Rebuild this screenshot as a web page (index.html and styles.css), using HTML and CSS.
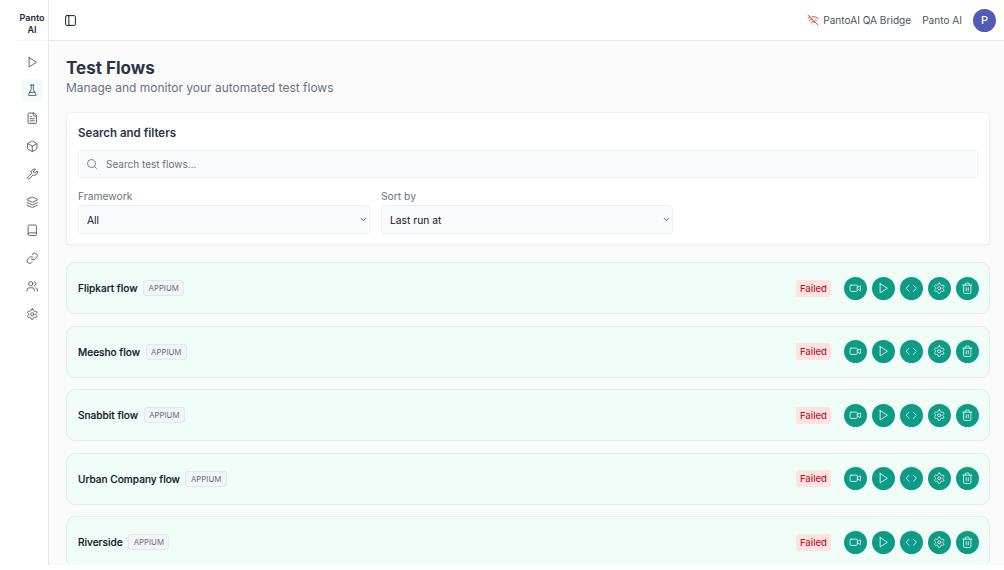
FILE: index.html
```html
<!DOCTYPE html>
<html lang="en">
<head>
<meta charset="utf-8">
<title>Test Flows</title>
<link rel="stylesheet" href="styles.css">
</head>
<body>
<svg class="sprite" aria-hidden="true">
  <symbol id="i-play" viewBox="0 0 24 24"><polygon points="6 3 20 12 6 21 6 3"/></symbol>
  <symbol id="i-flask" viewBox="0 0 24 24"><path d="M10 2v7.527a2 2 0 0 1-.211.896L4.72 20.55a1 1 0 0 0 .9 1.45h12.76a1 1 0 0 0 .9-1.45l-5.069-10.127A2 2 0 0 1 14 9.527V2"/><path d="M8.5 2h7"/><path d="M7 16h10"/></symbol>
  <symbol id="i-file" viewBox="0 0 24 24"><path d="M15 2H6a2 2 0 0 0-2 2v16a2 2 0 0 0 2 2h12a2 2 0 0 0 2-2V7Z"/><path d="M14 2v4a2 2 0 0 0 2 2h4"/><path d="M10 9H8"/><path d="M16 13H8"/><path d="M16 17H8"/></symbol>
  <symbol id="i-box" viewBox="0 0 24 24"><path d="M21 8a2 2 0 0 0-1-1.73l-7-4a2 2 0 0 0-2 0l-7 4A2 2 0 0 0 3 8v8a2 2 0 0 0 1 1.73l7 4a2 2 0 0 0 2 0l7-4A2 2 0 0 0 21 16Z"/><path d="m3.3 7 8.7 5 8.7-5"/><path d="M12 22V12"/></symbol>
  <symbol id="i-wrench" viewBox="0 0 24 24"><path d="M14.7 6.3a1 1 0 0 0 0 1.4l1.6 1.6a1 1 0 0 0 1.4 0l3.77-3.77a6 6 0 0 1-7.94 7.94l-6.91 6.91a2.12 2.12 0 0 1-3-3l6.91-6.91a6 6 0 0 1 7.94-7.94l-3.76 3.76z"/></symbol>
  <symbol id="i-layers" viewBox="0 0 24 24"><path d="M12.83 2.18a2 2 0 0 0-1.66 0L2.6 6.08a1 1 0 0 0 0 1.83l8.58 3.91a2 2 0 0 0 1.66 0l8.58-3.9a1 1 0 0 0 0-1.83Z"/><path d="m22 17.65-9.17 4.16a2 2 0 0 1-1.66 0L2 17.65"/><path d="m22 12.65-9.17 4.16a2 2 0 0 1-1.66 0L2 12.65"/></symbol>
  <symbol id="i-book" viewBox="0 0 24 24"><path d="M4 19.5v-15A2.5 2.5 0 0 1 6.5 2H18a2 2 0 0 1 2 2v16a2 2 0 0 1-2 2H6.5a2.5 2.5 0 0 1 0-5H20"/></symbol>
  <symbol id="i-link" viewBox="0 0 24 24"><path d="M10 13a5 5 0 0 0 7.54.54l3-3a5 5 0 0 0-7.07-7.07l-1.72 1.71"/><path d="M14 11a5 5 0 0 0-7.54-.54l-3 3a5 5 0 0 0 7.07 7.07l1.71-1.71"/></symbol>
  <symbol id="i-users" viewBox="0 0 24 24"><path d="M16 21v-2a4 4 0 0 0-4-4H6a4 4 0 0 0-4 4v2"/><circle cx="9" cy="7" r="4"/><path d="M22 21v-2a4 4 0 0 0-3-3.87"/><path d="M16 3.13a4 4 0 0 1 0 7.75"/></symbol>
  <symbol id="i-gear" viewBox="0 0 24 24"><path d="M12.22 2h-.44a2 2 0 0 0-2 2v.18a2 2 0 0 1-1 1.73l-.43.25a2 2 0 0 1-2 0l-.15-.08a2 2 0 0 0-2.73.73l-.22.38a2 2 0 0 0 .73 2.73l.15.1a2 2 0 0 1 1 1.72v.51a2 2 0 0 1-1 1.74l-.15.09a2 2 0 0 0-.73 2.73l.22.38a2 2 0 0 0 2.73.73l.15-.08a2 2 0 0 1 2 0l.43.25a2 2 0 0 1 1 1.73V20a2 2 0 0 0 2 2h.44a2 2 0 0 0 2-2v-.18a2 2 0 0 1 1-1.73l.43-.25a2 2 0 0 1 2 0l.15.08a2 2 0 0 0 2.73-.73l.22-.39a2 2 0 0 0-.73-2.73l-.15-.08a2 2 0 0 1-1-1.74v-.5a2 2 0 0 1 1-1.74l.15-.09a2 2 0 0 0 .73-2.73l-.22-.38a2 2 0 0 0-2.73-.73l-.15.08a2 2 0 0 1-2 0l-.43-.25a2 2 0 0 1-1-1.73V4a2 2 0 0 0-2-2z"/><circle cx="12" cy="12" r="3"/></symbol>
  <symbol id="i-video" viewBox="0 0 24 24"><path d="m16 13 5.223 3.482a.5.5 0 0 0 .777-.416V7.87a.5.5 0 0 0-.752-.432L16 10.5"/><rect x="2" y="6" width="14" height="12" rx="2"/></symbol>
  <symbol id="i-code" viewBox="0 0 24 24"><path d="m16 18 6-6-6-6"/><path d="m8 6-6 6 6 6"/></symbol>
  <symbol id="i-trash" viewBox="0 0 24 24"><path d="M3 6h18"/><path d="M19 6v14a2 2 0 0 1-2 2H7a2 2 0 0 1-2-2V6"/><path d="M8 6V4a2 2 0 0 1 2-2h4a2 2 0 0 1 2 2v2"/><path d="M10 11v6"/><path d="M14 11v6"/></symbol>
  <symbol id="i-wifi-off" viewBox="0 0 24 24"><path d="M12 20h.01"/><path d="M8.5 16.429a5 5 0 0 1 7 0"/><path d="M5 12.859a10 10 0 0 1 5.17-2.69"/><path d="M19 12.859a10 10 0 0 0-2.007-1.523"/><path d="M2 8.82a15 15 0 0 1 4.177-2.643"/><path d="M22 8.82a15 15 0 0 0-11.288-3.764"/><path d="m2 2 20 20"/></symbol>
  <symbol id="i-panel" viewBox="0 0 24 24"><rect x="3" y="3" width="18" height="18" rx="2"/><path d="M9 3v18"/></symbol>
  <symbol id="i-search" viewBox="0 0 24 24"><circle cx="11" cy="11" r="8"/><path d="m21 21-4.3-4.3"/></symbol>
  <symbol id="i-chevron" viewBox="0 0 24 24"><path d="m6 9 6 6 6-6"/></symbol>
</svg>

<div class="app">
  <aside class="sidebar">
    <div class="brand">Panto AI</div>
    <nav class="nav">
      <a class="nav-item"><svg class="icon"><use href="#i-play"/></svg></a>
      <a class="nav-item active"><svg class="icon"><use href="#i-flask"/></svg></a>
      <a class="nav-item"><svg class="icon"><use href="#i-file"/></svg></a>
      <a class="nav-item"><svg class="icon"><use href="#i-box"/></svg></a>
      <a class="nav-item"><svg class="icon"><use href="#i-wrench"/></svg></a>
      <a class="nav-item"><svg class="icon"><use href="#i-layers"/></svg></a>
      <a class="nav-item"><svg class="icon"><use href="#i-book"/></svg></a>
      <a class="nav-item"><svg class="icon"><use href="#i-link"/></svg></a>
      <a class="nav-item"><svg class="icon"><use href="#i-users"/></svg></a>
      <a class="nav-item"><svg class="icon"><use href="#i-gear"/></svg></a>
    </nav>
  </aside>

  <div class="body">
    <header class="topbar">
      <button class="panel-toggle"><svg class="icon dark"><use href="#i-panel"/></svg></button>
      <div class="top-right">
        <svg class="icon wifi"><use href="#i-wifi-off"/></svg>
        <span class="bridge">PantoAI QA Bridge</span>
        <span class="org">Panto AI</span>
        <span class="avatar">P</span>
      </div>
    </header>

    <main class="main">
      <h1 class="title">Test Flows</h1>
      <p class="subtitle">Manage and monitor your automated test flows</p>

      <section class="filters">
        <h2 class="filters-title">Search and filters</h2>
        <label class="search">
          <svg class="icon search-icon"><use href="#i-search"/></svg>
          <input class="search-input" type="text" placeholder="Search test flows...">
        </label>
        <div class="filter-row">
          <div class="field">
            <label class="field-label">Framework</label>
            <div class="select-wrap">
              <select class="select"><option>All</option></select>
              <svg class="icon chevron"><use href="#i-chevron"/></svg>
            </div>
          </div>
          <div class="field">
            <label class="field-label">Sort by</label>
            <div class="select-wrap">
              <select class="select"><option>Last run at</option></select>
              <svg class="icon chevron"><use href="#i-chevron"/></svg>
            </div>
          </div>
        </div>
      </section>

      <ul class="flows">
        <li class="flow">
          <span class="flow-name">Flipkart flow</span><span class="tag">APPIUM</span>
          <span class="status">Failed</span>
          <div class="actions">
            <button class="action"><svg class="icon"><use href="#i-video"/></svg></button>
            <button class="action"><svg class="icon"><use href="#i-play"/></svg></button>
            <button class="action"><svg class="icon"><use href="#i-code"/></svg></button>
            <button class="action"><svg class="icon"><use href="#i-gear"/></svg></button>
            <button class="action"><svg class="icon"><use href="#i-trash"/></svg></button>
          </div>
        </li>
        <li class="flow">
          <span class="flow-name">Meesho flow</span><span class="tag">APPIUM</span>
          <span class="status">Failed</span>
          <div class="actions">
            <button class="action"><svg class="icon"><use href="#i-video"/></svg></button>
            <button class="action"><svg class="icon"><use href="#i-play"/></svg></button>
            <button class="action"><svg class="icon"><use href="#i-code"/></svg></button>
            <button class="action"><svg class="icon"><use href="#i-gear"/></svg></button>
            <button class="action"><svg class="icon"><use href="#i-trash"/></svg></button>
          </div>
        </li>
        <li class="flow">
          <span class="flow-name">Snabbit flow</span><span class="tag">APPIUM</span>
          <span class="status">Failed</span>
          <div class="actions">
            <button class="action"><svg class="icon"><use href="#i-video"/></svg></button>
            <button class="action"><svg class="icon"><use href="#i-play"/></svg></button>
            <button class="action"><svg class="icon"><use href="#i-code"/></svg></button>
            <button class="action"><svg class="icon"><use href="#i-gear"/></svg></button>
            <button class="action"><svg class="icon"><use href="#i-trash"/></svg></button>
          </div>
        </li>
        <li class="flow">
          <span class="flow-name">Urban Company flow</span><span class="tag">APPIUM</span>
          <span class="status">Failed</span>
          <div class="actions">
            <button class="action"><svg class="icon"><use href="#i-video"/></svg></button>
            <button class="action"><svg class="icon"><use href="#i-play"/></svg></button>
            <button class="action"><svg class="icon"><use href="#i-code"/></svg></button>
            <button class="action"><svg class="icon"><use href="#i-gear"/></svg></button>
            <button class="action"><svg class="icon"><use href="#i-trash"/></svg></button>
          </div>
        </li>
        <li class="flow">
          <span class="flow-name">Riverside</span><span class="tag">APPIUM</span>
          <span class="status">Failed</span>
          <div class="actions">
            <button class="action"><svg class="icon"><use href="#i-video"/></svg></button>
            <button class="action"><svg class="icon"><use href="#i-play"/></svg></button>
            <button class="action"><svg class="icon"><use href="#i-code"/></svg></button>
            <button class="action"><svg class="icon"><use href="#i-gear"/></svg></button>
            <button class="action"><svg class="icon"><use href="#i-trash"/></svg></button>
          </div>
        </li>
      </ul>
    </main>
  </div>
</div>
</body>
</html>
```

FILE: styles.css
```css
* { box-sizing: border-box; }
html, body { margin: 0; height: 100%; overflow: hidden; background: #fff; }
body { font-family: Inter, "Liberation Sans", sans-serif; color: #111827; }
.sprite { display: none; }

.icon {
  width: 14px; height: 14px; flex: none; display: block;
  fill: none; stroke: currentColor; stroke-width: 2;
  stroke-linecap: round; stroke-linejoin: round;
}

.app { display: flex; height: 565px; overflow: hidden; }

.sidebar {
  width: 49px; flex: none; background: #fff;
  border-right: 1px solid #e5e7eb;
  padding-left: 16px;
  display: flex; flex-direction: column; align-items: center;
}
.brand {
  height: 41px; width: 100%;
  padding: 12px 3px 0;
  border-bottom: 1px solid #f3f4f6;
  font-size: 9px; line-height: 11.5px; font-weight: 600; text-align: center;
  color: #1f2937;
}
.nav { display: flex; flex-direction: column; align-items: center; gap: 6px; padding-top: 10px; }
.nav-item {
  width: 22px; height: 22px; border-radius: 5px;
  display: flex; align-items: center; justify-content: center;
  color: #374151;
}
.nav-item .icon { width: 12.5px; height: 12.5px; stroke-width: 1.5; }
.nav-item.active { background: #effcf7; color: #374151; }

.body { flex: 1; min-width: 0; display: flex; flex-direction: column; }

.topbar {
  height: 41px; flex: none; background: #fff;
  border-bottom: 1px solid #e5e7eb;
  display: flex; align-items: center; justify-content: space-between;
  padding: 0 8px 0 14.5px;
}
.panel-toggle { padding: 0; border: 0; background: none; color: #111827; display: flex; }
.icon.dark { width: 13px; height: 13px; stroke-width: 1.8; }
.top-right { display: flex; align-items: center; font-size: 10.1px; color: #4b5563; }
.wifi { color: #ef4444; width: 12px; height: 12px; margin-right: 4px; }
.bridge { margin-right: 11px; }
.org { margin-right: 11px; }
.avatar {
  width: 23px; height: 23px; border-radius: 50%;
  background: #4f5bb5; color: #fff;
  display: flex; align-items: center; justify-content: center;
  font-size: 11px; font-weight: 500;
}

.main {
  flex: 1; min-height: 0; overflow: hidden;
  background: #fafafa;
  padding: 17px 14px 0 17px;
}
.title { margin: 0; font-size: 17px; line-height: 20px; font-weight: 700; color: #2a3547; }
.subtitle { margin: 1px 0 0; font-size: 12px; line-height: 18px; color: #6b7280; }

.filters {
  margin-top: 15px; height: 133px;
  background: #fff; border: 1px solid #eceef1; border-radius: 4px;
  padding: 13px 11px;
  box-shadow: 0 1px 2px rgba(0,0,0,.03);
}
.filters-title { margin: 0; font-size: 11.5px; line-height: 14px; font-weight: 600; color: #2a3547; }
.search {
  margin-top: 10px; height: 28px; position: relative; display: block;
}
.search-icon { position: absolute; left: 8px; top: 8px; width: 12px; height: 12px; color: #6b7280; stroke-width: 1.7; }
.search-input {
  width: 100%; height: 100%;
  background: #f9fafb; border: 1px solid #eceef1; border-radius: 4px;
  padding: 0 8px 0 27px;
  font: 10px Inter, "Liberation Sans", sans-serif; color: #111827;
}
.search-input::placeholder { color: #6b7280; opacity: 1; }
.filter-row { display: flex; gap: 11px; margin-top: 11px; }
.field { width: 292px; }
.field-label { display: block; font-size: 10.3px; line-height: 14px; color: #6b7280; }
.select-wrap { position: relative; margin-top: 2px; }
.select {
  display: block; width: 100%; height: 29px;
  appearance: none;
  background: #f9fafb; border: 1px solid #eceef1; border-radius: 4px;
  padding: 0 8px;
  font: 10.3px Inter, "Liberation Sans", sans-serif; color: #111827;
}
.chevron { position: absolute; right: 2px; top: 10px; width: 9px; height: 9px; color: #374151; stroke-width: 2.2; pointer-events: none; }

.flows { list-style: none; margin: 17px 0 0; padding: 0; display: flex; flex-direction: column; gap: 11.5px; }
.flow {
  height: 52px; flex: none;
  background: #effcf7; border: 1px solid #e8ecea; border-radius: 9px;
  display: flex; align-items: center;
  padding: 0 10px 0 11px;
}
.flow-name { font-size: 10.1px; font-weight: 500; color: #111827; -webkit-text-stroke: .15px #111827; }
.tag {
  margin-left: 5.5px; height: 16px; padding: 0 4.5px;
  background: #f3f4f6; border: 1px solid #e5e7eb; border-radius: 3px;
  font-size: 7.8px; line-height: 14px; color: #6b7280;
}
.status {
  margin-left: auto; height: 17px; padding: 0 4px;
  background: #fee2e2; border-radius: 3px;
  font-size: 9.5px; line-height: 17px; font-weight: 500; color: #b91c1c;
}
.actions { display: flex; gap: 5px; margin-left: 13px; }
.action {
  width: 23px; height: 23px; padding: 0; border: 0; border-radius: 50%;
  background: #0e9b86; color: #ecfdf5;
  display: flex; align-items: center; justify-content: center;
}
.action .icon { width: 12.5px; height: 12.5px; stroke-width: 1.6; }
```
